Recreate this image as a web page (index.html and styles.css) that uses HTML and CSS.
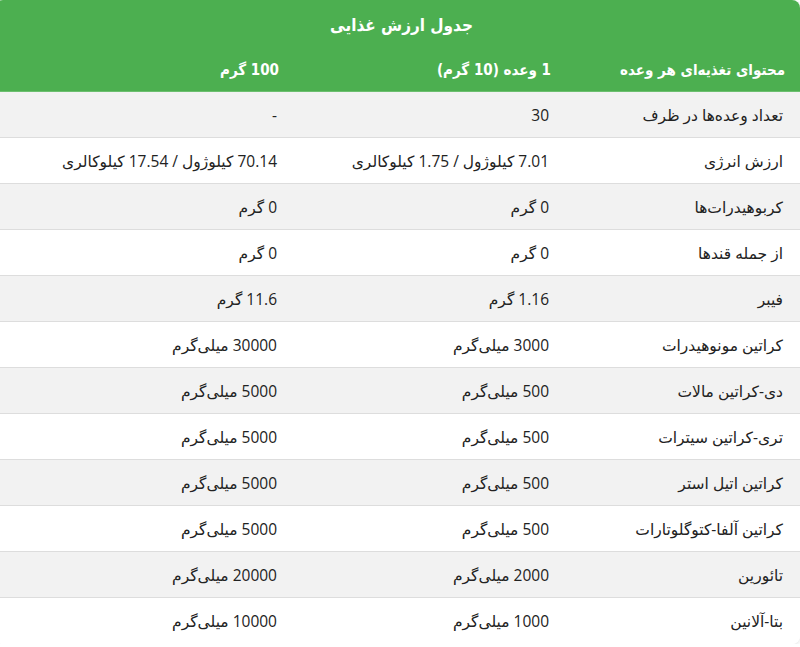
FILE: index.html
```html
<!DOCTYPE html>
<html lang="fa" dir="rtl">
<head>
<meta charset="utf-8">
<title>جدول ارزش غذایی</title>
<link rel="stylesheet" href="styles.css">
</head>
<body>
<div class="card">
<table class="nutrition">
<colgroup><col class="c1"><col class="c2"><col class="c3"></colgroup>
<thead>
<tr><th class="title" colspan="3">جدول ارزش غذایی</th></tr>
<tr class="cols"><th>محتوای تغذیه‌ای هر وعده</th><th>1 وعده (10 گرم)</th><th>100 گرم</th></tr>
</thead>
<tbody>
<tr><td>تعداد وعده‌ها در ظرف</td><td>30</td><td>-</td></tr>
<tr><td>ارزش انرژی</td><td>7.01 کیلوژول / 1.75 کیلوکالری</td><td>70.14 کیلوژول / 17.54 کیلوکالری</td></tr>
<tr><td>کربوهیدرات‌ها</td><td>0 گرم</td><td>0 گرم</td></tr>
<tr><td>از جمله قندها</td><td>0 گرم</td><td>0 گرم</td></tr>
<tr><td>فیبر</td><td>1.16 گرم</td><td>11.6 گرم</td></tr>
<tr><td>کراتین مونوهیدرات</td><td>3000 میلی‌گرم</td><td>30000 میلی‌گرم</td></tr>
<tr><td>دی-کراتین مالات</td><td>500 میلی‌گرم</td><td>5000 میلی‌گرم</td></tr>
<tr><td>تری-کراتین سیترات</td><td>500 میلی‌گرم</td><td>5000 میلی‌گرم</td></tr>
<tr><td>کراتین اتیل استر</td><td>500 میلی‌گرم</td><td>5000 میلی‌گرم</td></tr>
<tr><td>کراتین آلفا-کتوگلوتارات</td><td>500 میلی‌گرم</td><td>5000 میلی‌گرم</td></tr>
<tr><td>تائورین</td><td>2000 میلی‌گرم</td><td>20000 میلی‌گرم</td></tr>
<tr><td>بتا-آلانین</td><td>1000 میلی‌گرم</td><td>10000 میلی‌گرم</td></tr>
</tbody>
</table>
</div>
</body>
</html>
```
FILE: styles.css
```css
html, body {
  margin: 0;
  padding: 0;
  background: #ffffff;
}
body {
  font-family: "Open Sans", "DejaVu Sans", sans-serif;
  color: #222222;
}
.card {
  width: 805px;
  margin-left: -8px;
  border-radius: 8px;
  overflow: hidden;
  box-shadow: 0 1px 4px rgba(0, 0, 0, 0.12);
}
.nutrition {
  width: 100%;
  border-collapse: collapse;
  table-layout: fixed;
}
.c1 { width: 234px; }
.c2 { width: 272px; }
.c3 { width: 299px; }
.nutrition th {
  background: #4caf50;
  color: #ffffff;
  font-family: "DejaVu Sans Condensed", "DejaVu Sans", sans-serif;
  font-weight: bold;
  text-align: right;
}
.nutrition .title {
  text-align: center;
  font-size: 17px;
  height: 49px;
  padding: 0;
  padding-left: 8px;
}
.nutrition .cols th {
  font-size: 15px;
  height: 42px;
  padding: 0 15px;
  border-bottom: 1px solid #6cbf6f;
}
.nutrition td {
  height: 46px;
  padding: 0 17px 0 15px;
  font-size: 15.5px;
  text-align: right;
  border-bottom: 1px solid #dddddd;
  box-sizing: border-box;
}
.nutrition tbody tr:nth-child(odd) td {
  background: #f2f2f2;
}
.nutrition tbody tr:nth-child(even) td {
  background: #ffffff;
}
.nutrition tbody tr:last-child td {
  border-bottom: none;
}
```
